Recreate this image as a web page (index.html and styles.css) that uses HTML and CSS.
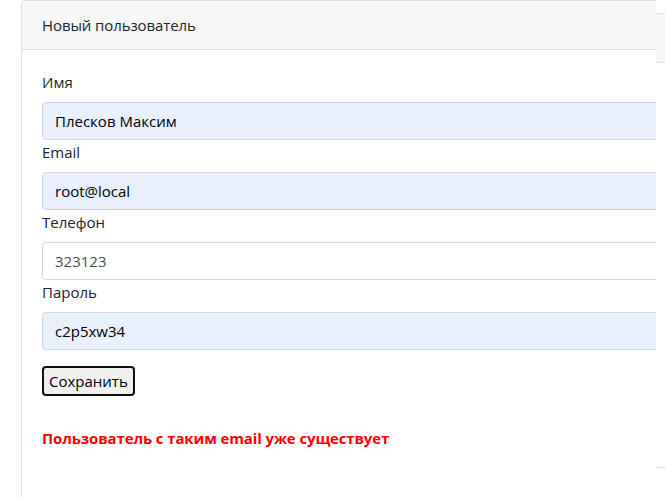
FILE: index.html
```html
<!DOCTYPE html>
<html lang="ru">
<head>
<meta charset="utf-8">
<title>Новый пользователь</title>
<link rel="stylesheet" href="styles.css">
</head>
<body>
<div class="stage">
  <div class="back-card" aria-hidden="true">
    <div class="card-header"></div>
    <div class="card-body">
      <div class="ghost-label"></div><div class="ghost-input"></div>
      <div class="ghost-label"></div><div class="ghost-input"></div>
      <div class="ghost-label"></div><div class="ghost-input"></div>
      <div class="ghost-label"></div><div class="ghost-input"></div>
    </div>
  </div>
  <div class="clip">
    <div class="card">
      <div class="card-header">Новый пользователь</div>
      <div class="card-body">
        <form class="form">
          <div class="form-group">
            <label class="label" for="name">Имя</label>
            <input class="input autofill" id="name" type="text" value="Плесков Максим">
          </div>
          <div class="form-group">
            <label class="label" for="email">Email</label>
            <input class="input autofill" id="email" type="text" value="root@local">
          </div>
          <div class="form-group">
            <label class="label" for="phone">Телефон</label>
            <input class="input" id="phone" type="text" value="323123">
          </div>
          <div class="form-group">
            <label class="label" for="pass">Пароль</label>
            <input class="input autofill" id="pass" type="text" value="c2p5xw34">
          </div>
          <div class="actions">
            <button class="btn" type="button">Сохранить</button>
          </div>
          <p class="error">Пользователь с таким email уже существует</p>
        </form>
      </div>
    </div>
  </div>
</div>
</body>
</html>
```
FILE: styles.css
```css
* { box-sizing: border-box; }
html, body { margin: 0; padding: 0; background: #fff; }
body {
  font-family: "Open Sans", "Noto Sans", sans-serif;
  font-size: 15px;
  line-height: 24px;
  color: #212529;
  overflow: hidden;
  height: 497px;
}
.stage {
  position: relative;
  padding-left: 21px;
  height: 497px;
  overflow: hidden;
}
.clip {
  position: relative;
  z-index: 1;
  width: 635px;
  overflow: hidden;
  height: 497px;
}
.card {
  width: 720px;
  min-height: 520px;
  border: 1px solid #dfdfdf;
  border-radius: 4px;
  background: #fff;
}
.card-header {
  height: 49px;
  padding: 12px 20px;
  background: #f7f7f7;
  border-bottom: 1px solid #dfdfdf;
  letter-spacing: -0.1px;
}
.card .card-header { border-radius: 3px 3px 0 0; }
.card-body { padding: 20px; }
.form { margin: 0; }
.label {
  display: block;
  height: 24px;
  margin-bottom: 8px;
}
.input {
  display: block;
  width: 100%;
  height: 38px;
  padding: 6px 12px;
  border: 1px solid #ced4da;
  border-radius: 4px;
  font: inherit;
  color: #495057;
  background: #fff;
  outline: none;
}
.input.autofill {
  background: #e8f0fe;
  color: #000;
}
.actions { margin-top: 16px; }
.btn {
  font: inherit;
  line-height: 20px;
  height: 30px;
  padding: 2px 5px;
  color: #000;
  background: #efefef;
  border: 2px solid #101010;
  border-radius: 4px;
}
.error {
  margin: 30px 0 0;
  color: #ff0000;
  font-weight: 700;
  letter-spacing: -0.12px;
}
.back-card {
  position: absolute;
  left: 300px;
  top: 13px;
  width: 365px;
  height: 455px;
  border: 1px solid #dfdfdf;
  border-right: 0;
  background: #fff;
}
.ghost-label { height: 24px; margin-bottom: 8px; }
.ghost-input {
  height: 38px;
  border: 1px solid #ced4da;
  border-right: 0;
  border-radius: 4px 0 0 4px;
}
```
